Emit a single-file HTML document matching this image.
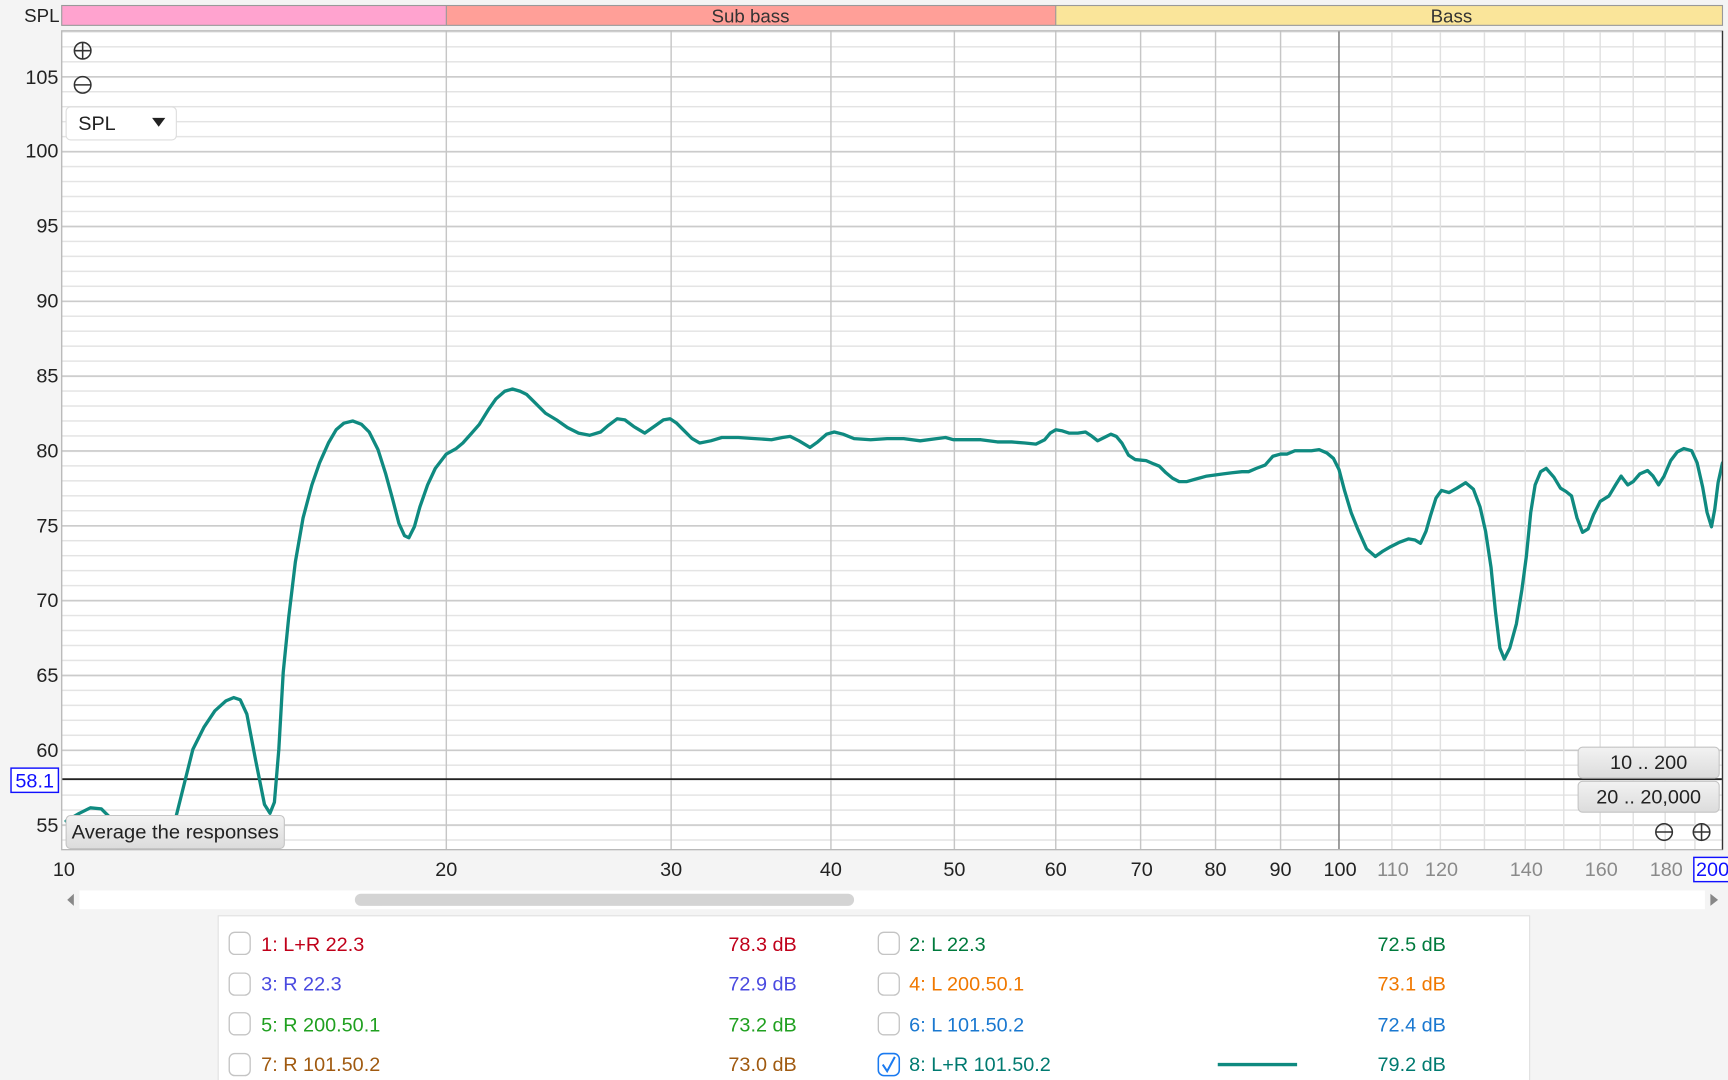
<!DOCTYPE html>
<html><head><meta charset="utf-8"><style>
html,body{margin:0;padding:0;background:#f4f4f4;overflow:hidden}
svg{display:block}
text{font-family:"Liberation Sans",Arial,sans-serif}
</style></head><body>
<svg width="1728" height="1080" viewBox="0 0 1568 980" xmlns="http://www.w3.org/2000/svg">
<defs>
<pattern id="mi" patternUnits="userSpaceOnUse" x="0" y="1.1" width="1568" height="13.58"><rect x="0" y="0" width="1568" height="1.3" fill="#e3e3e3"/></pattern>
<pattern id="ma" patternUnits="userSpaceOnUse" x="0" y="1.1" width="1568" height="67.9"><rect x="0" y="-0.3" width="1568" height="1.8" fill="#cbcbcb"/></pattern>
<clipPath id="pc"><rect x="56" y="28" width="1507" height="743"/></clipPath>
<linearGradient id="bg" x1="0" y1="0" x2="0" y2="1"><stop offset="0" stop-color="#f2f2f2"/><stop offset="1" stop-color="#dcdcdc"/></linearGradient>
</defs>
<rect width="1568" height="980" fill="#f4f4f4"/>
<text x="54" y="20" font-size="17" text-anchor="end" fill="#222">SPL</text>
<rect x="56" y="5" width="349" height="18" fill="#ffa3cf"/>
<rect x="405" y="5" width="553" height="18" fill="#ff9f98"/>
<rect x="958" y="5" width="605" height="18" fill="#fae59a"/>
<rect x="56" y="5" width="1507" height="18" fill="none" stroke="#999" stroke-width="1"/>
<line x1="405" y1="5" x2="405" y2="23" stroke="#999"/>
<line x1="958" y1="5" x2="958" y2="23" stroke="#999"/>
<text x="681" y="20.5" font-size="17" text-anchor="middle" fill="#333">Sub bass</text>
<text x="1317" y="20.5" font-size="17" text-anchor="middle" fill="#333">Bass</text>
<rect x="56" y="28" width="1507" height="743" fill="#fff"/>
<g clip-path="url(#pc)">
<rect x="56" y="28" width="1507" height="743" fill="url(#mi)"/>
<rect x="56" y="28" width="1507" height="743" fill="url(#ma)"/>
<g stroke="#e0e0e0" stroke-width="1.3">
<line x1="1263" y1="28" x2="1263" y2="771"/><line x1="1307" y1="28" x2="1307" y2="771"/><line x1="1347" y1="28" x2="1347" y2="771"/><line x1="1384" y1="28" x2="1384" y2="771"/><line x1="1419" y1="28" x2="1419" y2="771"/><line x1="1452" y1="28" x2="1452" y2="771"/><line x1="1482" y1="28" x2="1482" y2="771"/><line x1="1511" y1="28" x2="1511" y2="771"/><line x1="1538" y1="28" x2="1538" y2="771"/>
</g>
<g stroke="#c6c6c6" stroke-width="1.3">
<line x1="405" y1="28" x2="405" y2="771"/><line x1="609" y1="28" x2="609" y2="771"/><line x1="754" y1="28" x2="754" y2="771"/><line x1="866" y1="28" x2="866" y2="771"/><line x1="958" y1="28" x2="958" y2="771"/><line x1="1035" y1="28" x2="1035" y2="771"/><line x1="1103" y1="28" x2="1103" y2="771"/><line x1="1162" y1="28" x2="1162" y2="771"/>
</g>
<line x1="1215" y1="28" x2="1215" y2="771" stroke="#7a7a7a" stroke-width="1.3"/>
<line x1="56" y1="707" x2="1563" y2="707" stroke="#222" stroke-width="1.6"/>
<polyline fill="none" stroke="#0f8a80" stroke-width="3" stroke-linejoin="round" stroke-linecap="round" points="60,745 72,738 82,733 92,734 100,742 108,775 155,775 160,740 167,712 175,680 185,660 195,645 205,636 212,633 218,635 224,648 232,690 240,730 245,738 249,728 253,680 257,610 262,560 268,510 275,470 283,440 290,420 298,402 305,390 312,384 320,382 328,385 335,392 343,408 350,430 356,452 362,475 367,486 371,488 376,478 381,460 388,440 395,425 405,412 414,407 420,402 428,393 435,385 443,372 450,362 458,355 465,353 472,355 478,358 486,366 495,375 505,381 515,388 525,393 535,395 545,392 552,386 560,380 567,381 575,387 585,393 595,386 602,381 608,380 614,384 620,390 628,398 635,402 645,400 655,397 670,397 685,398 700,399 710,397 717,396 725,400 735,406 742,401 750,394 757,392 765,394 775,398 790,399 805,398 820,398 835,400 850,398 858,397 865,399 875,399 890,399 905,401 918,401 930,402 940,403 948,399 953,393 958,390 964,391 970,393 978,393 985,392 991,396 996,400 1002,397 1008,394 1013,396 1018,402 1024,413 1030,417 1040,418 1047,421 1052,423 1058,429 1064,434 1070,437 1077,437 1084,435 1095,432 1110,430 1118,429 1127,428 1133,428 1140,425 1148,422 1155,414 1162,412 1168,412 1175,409 1182,409 1190,409 1197,408 1204,411 1210,416 1215,426 1220,445 1226,465 1232,480 1240,498 1248,505 1255,500 1262,496 1270,492 1278,489 1284,490 1289,493 1294,482 1298,468 1303,452 1308,445 1315,447 1322,443 1330,438 1337,444 1343,460 1348,482 1353,515 1357,555 1361,588 1365,598 1370,588 1376,566 1381,535 1385,505 1389,465 1393,440 1398,428 1403,425 1410,433 1416,443 1421,446 1426,450 1431,470 1436,483 1441,480 1446,467 1452,455 1460,450 1466,440 1471,432 1477,440 1482,437 1488,430 1495,427 1500,432 1505,440 1510,432 1516,418 1522,410 1528,407 1535,409 1540,420 1545,442 1549,465 1553,478 1556,462 1559,438 1563,420"/>
</g>
<rect x="56" y="28" width="1507" height="743" fill="none" stroke="#b8b8b8" stroke-width="1.2"/>
<line x1="1563" y1="28" x2="1563" y2="771" stroke="#333" stroke-width="1.2"/>
<g font-size="18" text-anchor="end" fill="#222">
<text x="53" y="76">105</text><text x="53" y="143">100</text><text x="53" y="211">95</text><text x="53" y="279">90</text><text x="53" y="347">85</text><text x="53" y="415">80</text><text x="53" y="483">75</text><text x="53" y="551">70</text><text x="53" y="619">65</text><text x="53" y="687">60</text><text x="53" y="755">55</text>
</g>
<rect x="10" y="697" width="43" height="22" fill="#fff" stroke="#1010ff" stroke-width="1.3"/>
<text x="31.5" y="714.5" font-size="18" text-anchor="middle" fill="#1010ff">58.1</text>
<g font-size="18" text-anchor="middle" fill="#222">
<text x="58" y="795">10</text><text x="405" y="795">20</text><text x="609" y="795">30</text><text x="754" y="795">40</text><text x="866" y="795">50</text><text x="958" y="795">60</text><text x="1036" y="795">70</text><text x="1103" y="795">80</text><text x="1162" y="795">90</text><text x="1216" y="795">100</text>
</g>
<g font-size="18" text-anchor="middle" fill="#8a8a8a">
<text x="1264" y="795">110</text><text x="1308" y="795">120</text><text x="1385" y="795">140</text><text x="1453" y="795">160</text><text x="1512" y="795">180</text>
</g>
<rect x="1537" y="778" width="33" height="22" fill="#fff" stroke="#1010ff" stroke-width="1.3"/>
<text x="1539" y="795" font-size="18" fill="#1010ff">200</text>
<g stroke="#333" stroke-width="1.4" fill="none">
<circle cx="75" cy="46" r="7.5"/><line x1="67.5" y1="46" x2="82.5" y2="46"/><line x1="75" y1="38.5" x2="75" y2="53.5"/>
<circle cx="75" cy="77" r="7.5"/><line x1="67.5" y1="77" x2="82.5" y2="77"/>
<circle cx="1510" cy="755" r="7.5"/><line x1="1502.5" y1="755" x2="1517.5" y2="755"/>
<circle cx="1544" cy="755" r="7.5"/><line x1="1536.5" y1="755" x2="1551.5" y2="755"/><line x1="1544" y1="747.5" x2="1544" y2="762.5"/>
</g>
<rect x="60" y="97" width="100" height="30" rx="4" fill="#fff" stroke="#ddd"/>
<text x="71" y="118" font-size="18" fill="#222">SPL</text>
<path d="M138 107 L150 107 L144 115 Z" fill="#222"/>
<rect x="1432" y="678" width="128" height="28" rx="4" fill="url(#bg)" stroke="#c4c4c4"/>
<text x="1496" y="698" font-size="18" text-anchor="middle" fill="#222">10 .. 200</text>
<rect x="1432" y="709" width="128" height="28" rx="4" fill="url(#bg)" stroke="#c4c4c4"/>
<text x="1496" y="729" font-size="18" text-anchor="middle" fill="#222">20 .. 20,000</text>
<rect x="60" y="740" width="198" height="30" rx="4" fill="url(#bg)" stroke="#c4c4c4"/>
<text x="159" y="761" font-size="18" text-anchor="middle" fill="#222" textLength="188" lengthAdjust="spacingAndGlyphs">Average the responses</text>
<rect x="72" y="808" width="1475" height="17" fill="#fff"/>
<rect x="322" y="811" width="453" height="11" rx="5.5" fill="#d4d4d4"/>
<path d="M67 811 L67 822 L61 816.5 Z" fill="#888"/>
<path d="M1552 811 L1552 822 L1559 816.5 Z" fill="#888"/>
<rect x="198" y="831" width="1190" height="160" fill="#fff" stroke="#e0e0e0"/>
<g fill="#fff" stroke="#c4c4c4" stroke-width="1.2">
<rect x="208" y="846" width="19" height="20" rx="5"/><rect x="208" y="883" width="19" height="20" rx="5"/><rect x="208" y="919" width="19" height="20" rx="5"/><rect x="208" y="956" width="19" height="20" rx="5"/>
<rect x="797" y="846" width="19" height="20" rx="5"/><rect x="797" y="883" width="19" height="20" rx="5"/><rect x="797" y="919" width="19" height="20" rx="5"/>
</g>
<rect x="797" y="956" width="19" height="20" rx="5" fill="#fff" stroke="#1a7af0" stroke-width="1.4"/>
<path d="M801 966 L805 972 L812 959" fill="none" stroke="#1a7af0" stroke-width="1.8"/>
<g font-size="18">
<text x="237" y="863" fill="#c0001a">1: L+R 22.3</text><text x="723" y="863" text-anchor="end" fill="#c0001a">78.3 dB</text>
<text x="237" y="899" fill="#4a4ae0">3: R 22.3</text><text x="723" y="899" text-anchor="end" fill="#4a4ae0">72.9 dB</text>
<text x="237" y="936" fill="#20a020">5: R 200.50.1</text><text x="723" y="936" text-anchor="end" fill="#20a020">73.2 dB</text>
<text x="237" y="972" fill="#a05a10">7: R 101.50.2</text><text x="723" y="972" text-anchor="end" fill="#a05a10">73.0 dB</text>
<text x="825" y="863" fill="#007a3d">2: L 22.3</text><text x="1312" y="863" text-anchor="end" fill="#007a3d">72.5 dB</text>
<text x="825" y="899" fill="#f07800">4: L 200.50.1</text><text x="1312" y="899" text-anchor="end" fill="#f07800">73.1 dB</text>
<text x="825" y="936" fill="#1a78d0">6: L 101.50.2</text><text x="1312" y="936" text-anchor="end" fill="#1a78d0">72.4 dB</text>
<text x="825" y="972" fill="#007a70">8: L+R 101.50.2</text><text x="1312" y="972" text-anchor="end" fill="#007a70">79.2 dB</text>
</g>
<line x1="1105" y1="966" x2="1177" y2="966" stroke="#0f8a80" stroke-width="3"/>
</svg>
</body></html>
